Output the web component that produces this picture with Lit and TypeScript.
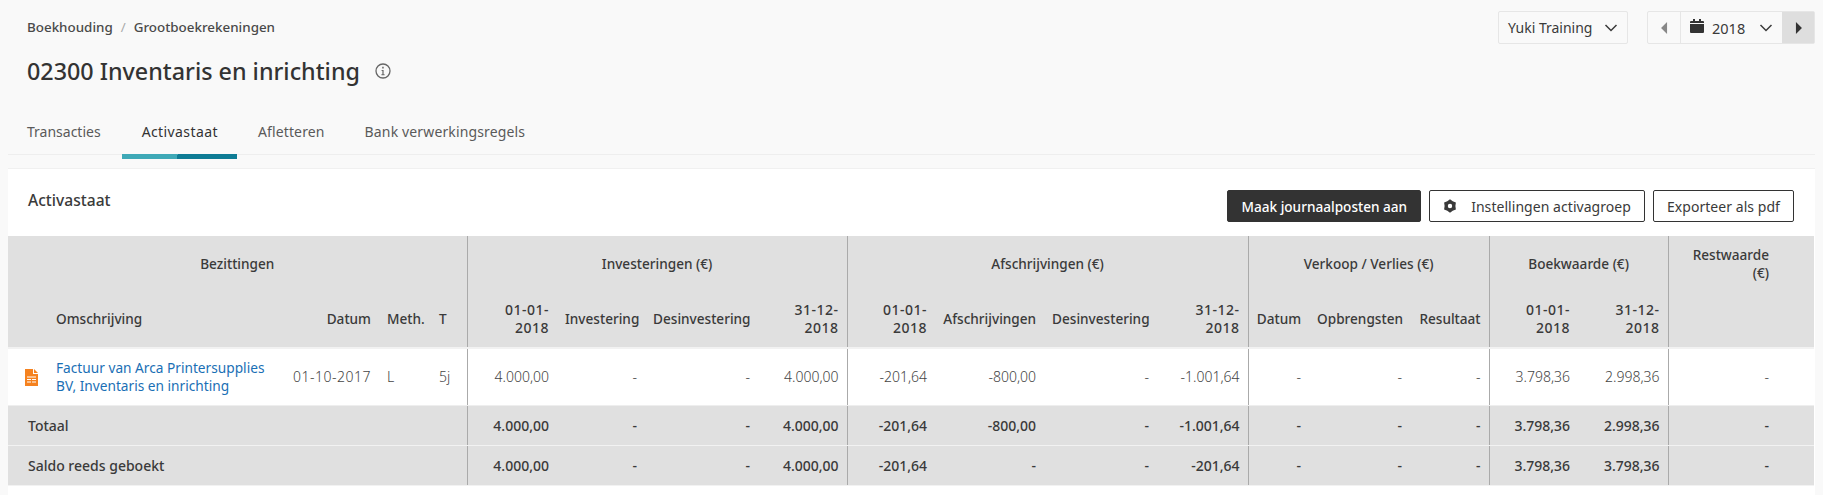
import { LitElement, html, css, svg } from 'lit';
import { customElement } from 'lit/decorators.js';

const COLS = [40, 236, 95, 52, 36, 90, 88, 113, 89, 88, 109, 113, 91, 61, 101, 79, 89, 90, 109, 37];

const chevron = html`<svg class="chev" viewBox="0 0 14 8"><path d="M1.5 1l5.500 5.500L12.500 1" fill="none" stroke="currentColor" stroke-width="1.5"/></svg>`;

const caret = (d: string) => svg`<svg class="caret" viewBox="0 0 8 14"><path d="${d}" fill="currentColor"/></svg>`;

const row = [
  '4.000,00', '-', '-', '4.000,00',
  '-201,64', '-800,00', '-', '-1.001,64',
  '-', '-', '-',
  '3.798,36', '2.998,36', '-',
];
const total = row;
const saldo = [
  '4.000,00', '-', '-', '4.000,00',
  '-201,64', '-', '-', '-201,64',
  '-', '-', '-',
  '3.798,36', '3.798,36', '-',
];
// columns that end a group get the vertical line
const GROUP_END = [3, 7, 10, 12];

@customElement('app-root')
export class AppRoot extends LitElement {
  static styles = css`
    :host {
      display: block;
      height: 495px;
      overflow: hidden;
      background: #f9f9f9;
      color: #3a3a3a;
      font-family: 'Noto Sans', sans-serif;
      font-size: 14px;
    }
    .top {
      display: flex;
      justify-content: space-between;
      padding: 11px 8px 0 27px;
    }
    .crumbs {
      line-height: 33px;
      font-size: 13.4px;
      font-weight: 500;
      color: #4a4a4a;
    }
    .crumbs .sep {
      color: #aaa;
      font-weight: 400;
      margin: 0 8px;
    }
    h1 {
      margin: 11px 0 0;
      font-size: 23.3px;
      line-height: 32px;
      font-weight: 500;
      color: #333;
      display: flex;
      align-items: center;
      gap: 15px;
    }
    .info {
      width: 16px;
      height: 16px;
      color: #666;
    }
    .controls {
      display: flex;
      gap: 19px;
      align-items: flex-start;
    }
    .select {
      box-sizing: border-box;
      height: 33px;
      width: 130px;
      border: 1px solid #e6e6e6;
      border-radius: 2px;
      display: flex;
      align-items: center;
      justify-content: space-between;
      padding: 0 9px;
    }
    .chev {
      width: 14px;
      height: 8px;
    }
    .year {
      box-sizing: border-box;
      height: 33px;
      width: 168px;
      border: 1px solid #e6e6e6;
      border-radius: 2px;
      display: flex;
      align-items: stretch;
      font-size: 14.5px;
    }
    .nav {
      width: 32px;
      display: flex;
      align-items: center;
      justify-content: center;
      color: #888;
    }
    .nav.next {
      background: #dedede;
      color: #333;
    }
    .caret {
      width: 7px;
      height: 12px;
    }
    .pick {
      flex: 1;
      border-left: 1px solid #e6e6e6;
      display: flex;
      align-items: center;
      padding: 0 9px;
      gap: 8px;
    }
    .pick .chev {
      margin-left: auto;
    }
    .cal {
      width: 14px;
      height: 14px;
      color: #333;
      margin-bottom: 3px;
    }
    .tabs {
      display: flex;
      margin: 0 8px;
      border-bottom: 1px solid #eee;
    }
    .tab {
      position: relative;
      padding: 35px 20px 12px;
      line-height: 20px;
      letter-spacing: 0.14px;
      color: #5a5a5a;
    }
    .tab.first {
      letter-spacing: 0;
      padding-left: 19px;
      padding-right: 21px;
    }
    .tab.active {
      color: #333;
      letter-spacing: 0.4px;
      padding-right: 19px;
    }
    .tab.after-active {
      padding-left: 21px;
    }
    .tab.active::after {
      content: '';
      position: absolute;
      left: 0;
      right: 0;
      bottom: -5px;
      height: 5px;
      background: linear-gradient(105deg, #3fa9b7 0 48%, #0e7c95 48%);
    }
    .card {
      margin: 13px 8px 0;
      background: #fff;
      border-top: 1px solid #f0f0f0;
      height: 400px;
    }
    .card-head {
      display: flex;
      justify-content: space-between;
      padding: 21px 21px 14px 20px;
    }
    .card-head h2 {
      margin: 0;
      font-size: 15.6px;
      font-weight: 500;
      line-height: 20px;
    }
    .btns {
      display: flex;
      gap: 8px;
    }
    .btn {
      box-sizing: border-box;
      height: 32px;
      padding: 0 13px;
      display: flex;
      align-items: center;
      border: 1px solid #333;
      border-radius: 2px;
      background: #fff;
      color: #3a3a3a;
      letter-spacing: 0.05px;
    }
    .btn.dark {
      background: #333;
      color: #fff;
      font-weight: 500;
      font-size: 13.6px;
      letter-spacing: 0;
    }
    .gear {
      width: 14px;
      height: 14px;
      margin-right: 14px;
    }
    table {
      table-layout: fixed;
      border-collapse: collapse;
      width: 1806px;
    }
    th,
    td {
      padding: 0 8px;
      text-align: right;
      line-height: 18px;
    }
    thead th {
      background: #e0e0e0;
      font-weight: 500;
      font-size: 13.6px;
      color: #3a3a3a;
    }
    thead th.date {
      font-size: 14px;
      letter-spacing: 0.5px;
    }
    thead tr:first-child th {
      height: 55px;
      text-align: center;
    }
    thead tr:nth-child(2) th {
      height: 56px;
      border-bottom: 2px solid #f2f2f2;
    }
    th.left,
    td.left {
      text-align: left;
    }
    .line {
      border-right: 1px solid #aaa;
    }
    thead tr:first-child th.rest {
      text-align: right;
    }
    tbody td {
      color: #444;
      font-weight: 300;
    }
    tbody td.when {
      letter-spacing: 0.5px;
    }
    tbody tr.item td {
      height: 56px;
      border-bottom: 1px solid #eee;
    }
    tbody tr.sum td {
      height: 39px;
      background: #e0e0e0;
      border-bottom: 1px solid #f2f2f2;
      font-weight: 500;
      color: #3a3a3a;
    }
    tr.sum td.name {
      padding-left: 20px;
      text-align: left;
    }
    a {
      color: #1a6fb5;
      text-decoration: none;
      font-weight: 400;
      font-size: 13.7px;
    }
    .file {
      display: block;
      margin-left: 9px;
      width: 13px;
      height: 17px;
    }
  `;

  private renderCells(values: string[]) {
    return values.map(
      (v, i) => html`<td class=${GROUP_END.includes(i) ? 'line' : ''}>${v}</td>`
    );
  }

  private renderSum(label: string, values: string[]) {
    return html`<tr class="sum">
      <td class="name line" colspan="5">${label}</td>
      ${this.renderCells(values)}
      <td></td>
    </tr>`;
  }

  render() {
    return html`
      <div class="top">
        <div>
          <div class="crumbs">Boekhouding<span class="sep">/</span>Grootboekrekeningen</div>
          <h1>
            02300 Inventaris en inrichting
            <svg class="info" viewBox="0 0 16 16">
              <circle cx="8" cy="8" r="7" fill="none" stroke="currentColor" stroke-width="1.3"/>
              <path d="M6.600 7h2v4.200h1v1H6.400v-1h1V8h-.8zM7.200 3.800h1.500v1.700H7.200z" fill="currentColor"/>
            </svg>
          </h1>
        </div>
        <div class="controls">
          <div class="select">Yuki Training ${chevron}</div>
          <div class="year">
            <div class="nav">${caret('M7 0v14L0 7z')}</div>
            <div class="pick">
              <svg class="cal" viewBox="0 0 14 14">
                <path d="M0 5h14v8a1 1 0 0 1-1 1H1a1 1 0 0 1-1-1zM1 2h2V0h2v2h4V0h2v2h2a1 1 0 0 1 1 1v1H0V3a1 1 0 0 1 1-1z" fill="currentColor"/>
              </svg>
              2018 ${chevron}
            </div>
            <div class="nav next">${caret('M1 0v14l7-7z')}</div>
          </div>
        </div>
      </div>
      <div class="tabs">
        <div class="tab first">Transacties</div>
        <div class="tab active">Activastaat</div>
        <div class="tab after-active">Afletteren</div>
        <div class="tab">Bank verwerkingsregels</div>
      </div>
      <div class="card">
        <div class="card-head">
          <h2>Activastaat</h2>
          <div class="btns">
            <div class="btn dark">Maak journaalposten aan</div>
            <div class="btn">
              <svg class="gear" viewBox="0 0 14 14">
                <path fill-rule="evenodd" fill="currentColor" d="M7 .2L9.700 2.320 12.890 3.600 12.400 7l.49 3.400-3.190 1.280L7 13.800l-2.700-2.120-3.190-1.280L1.600 7l-.49-3.400L4.300 2.320zM7 4.800a2.200 2.200 0 1 0 0 4.400 2.200 2.200 0 0 0 0-4.400z"/>
              </svg>
              Instellingen activagroep
            </div>
            <div class="btn">Exporteer als pdf</div>
          </div>
        </div>
        <table>
          <colgroup>${COLS.map((w) => html`<col style="width:${w}px" />`)}</colgroup>
          <thead>
            <tr>
              <th colspan="5" class="line">Bezittingen</th>
              <th colspan="4" class="line">Investeringen (€)</th>
              <th colspan="4" class="line">Afschrijvingen (€)</th>
              <th colspan="3" class="line">Verkoop / Verlies (€)</th>
              <th colspan="2" class="line">Boekwaarde (€)</th>
              <th class="rest">Restwaarde<br />(€)</th>
              <th></th>
            </tr>
            <tr>
              <th></th>
              <th class="left">Omschrijving</th>
              <th>Datum</th>
              <th class="left">Meth.</th>
              <th class="left line">T</th>
              <th class="date">01-01-<br />2018</th>
              <th>Investering</th>
              <th>Desinvestering</th>
              <th class="date line">31-12-<br />2018</th>
              <th class="date">01-01-<br />2018</th>
              <th>Afschrijvingen</th>
              <th>Desinvestering</th>
              <th class="date line">31-12-<br />2018</th>
              <th>Datum</th>
              <th>Opbrengsten</th>
              <th class="line">Resultaat</th>
              <th class="date">01-01-<br />2018</th>
              <th class="date line">31-12-<br />2018</th>
              <th></th>
              <th></th>
            </tr>
          </thead>
          <tbody>
            <tr class="item">
              <td>
                <svg class="file" viewBox="0 0 13 17">
                  <path fill="#f5821f" d="M0 0h8v5h5v12H0z"/>
                  <path fill="#f5821f" d="M9 0l4 4H9z"/>
                  <path fill="#fff" d="M2 7.500h9v1H2zM2 10h4v1H2zM7 10h4v1H7zM2 12.500h4v1H2zM7 12.500h4v1H7z"/>
                </svg>
              </td>
              <td class="left"><a>Factuur van Arca Printersupplies BV, Inventaris en inrichting</a></td>
              <td class="when">01-10-2017</td>
              <td class="left">L</td>
              <td class="left line">5j</td>
              ${this.renderCells(row)}
              <td></td>
            </tr>
            ${this.renderSum('Totaal', total)}
            ${this.renderSum('Saldo reeds geboekt', saldo)}
          </tbody>
        </table>
      </div>
    `;
  }
}
